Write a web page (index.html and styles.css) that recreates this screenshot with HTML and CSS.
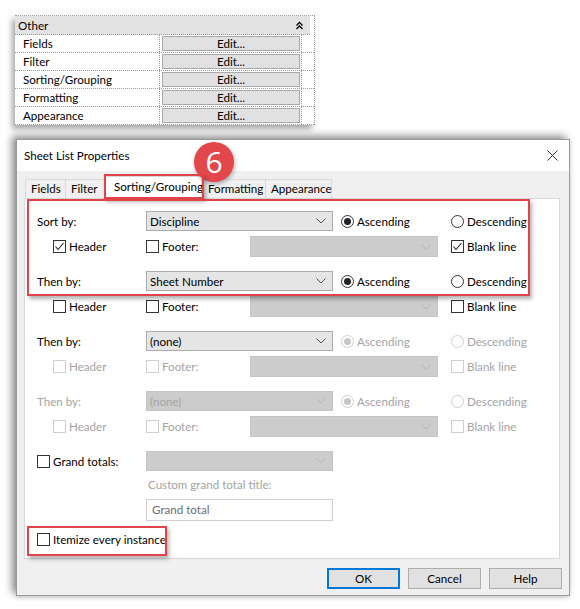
FILE: index.html
```html
<!DOCTYPE html>
<html>
<head>
<meta charset="utf-8">
<link rel="stylesheet" href="styles.css">
</head>
<body>
<div class="props">
  <div class="props-head">
    <span>Other</span>
    <svg class="collapse" width="9" height="9" viewBox="0 0 9 9"><polyline points="1.5,4.5 4.5,1.5 7.5,4.5" fill="none" stroke="#000" stroke-width="1.3"/><polyline points="1.5,8 4.5,5 7.5,8" fill="none" stroke="#000" stroke-width="1.3"/></svg>
  </div>
  <div class="prow"><div class="pname">Fields</div><div class="pval"><div class="editbtn">Edit...</div></div><div class="pend"></div></div>
  <div class="prow"><div class="pname">Filter</div><div class="pval"><div class="editbtn">Edit...</div></div><div class="pend"></div></div>
  <div class="prow"><div class="pname">Sorting/Grouping</div><div class="pval"><div class="editbtn">Edit...</div></div><div class="pend"></div></div>
  <div class="prow"><div class="pname">Formatting</div><div class="pval"><div class="editbtn">Edit...</div></div><div class="pend"></div></div>
  <div class="prow"><div class="pname">Appearance</div><div class="pval"><div class="editbtn">Edit...</div></div><div class="pend"></div></div>
</div>

<div class="dialog">
  <div class="titlebar">
    <span>Sheet List Properties</span>
    <svg class="close" width="11" height="11" viewBox="0 0 11 11"><path d="M0.5 0.5 L10.5 10.5 M10.5 0.5 L0.5 10.5" stroke="#333" stroke-width="1"/></svg>
  </div>
  <div class="dbody">
    <div class="tabs">
      <div class="tab t-fields">Fields</div>
      <div class="tab t-filter">Filter</div>
      <div class="tab active t-sort">Sorting/Grouping</div>
      <div class="tab t-format">Formatting</div>
      <div class="tab t-appear">Appearance</div>
    </div>
    <div class="panel">
      <div class="group">
        <div class="line">
          <div class="lbl">Sort by:</div>
          <div class="combo"><span>Discipline</span><svg class="chev" width="10" height="6" viewBox="0 0 10 6"><polyline points="0.5,0.5 5,5 9.5,0.5" fill="none" stroke="#555" stroke-width="1"/></svg></div>
          <div class="opt asc"><span class="radio on"></span>Ascending</div>
          <div class="opt"><span class="radio"></span>Descending</div>
        </div>
        <div class="line2">
          <div class="opt hdr"><span class="cb"><svg width="11" height="11" viewBox="0 0 11 11"><polyline points="1.5,5.5 4,8.5 9.5,2" fill="none" stroke="#222" stroke-width="1.1"/></svg></span>Header</div>
          <div class="opt ftr"><span class="cb"></span>Footer:</div>
          <div class="combo dis wide"><svg class="chev" width="10" height="6" viewBox="0 0 10 6"><polyline points="0.5,0.5 5,5 9.5,0.5" fill="none" stroke="#b5b5b5" stroke-width="1"/></svg></div>
          <div class="opt blank"><span class="cb"><svg width="11" height="11" viewBox="0 0 11 11"><polyline points="1.5,5.5 4,8.5 9.5,2" fill="none" stroke="#222" stroke-width="1.1"/></svg></span>Blank line</div>
        </div>
      </div>

      <div class="group">
        <div class="line">
          <div class="lbl">Then by:</div>
          <div class="combo"><span>Sheet Number</span><svg class="chev" width="10" height="6" viewBox="0 0 10 6"><polyline points="0.5,0.5 5,5 9.5,0.5" fill="none" stroke="#555" stroke-width="1"/></svg></div>
          <div class="opt asc"><span class="radio on"></span>Ascending</div>
          <div class="opt"><span class="radio"></span>Descending</div>
        </div>
        <div class="line2">
          <div class="opt hdr"><span class="cb"></span>Header</div>
          <div class="opt ftr"><span class="cb"></span>Footer:</div>
          <div class="combo dis wide"><svg class="chev" width="10" height="6" viewBox="0 0 10 6"><polyline points="0.5,0.5 5,5 9.5,0.5" fill="none" stroke="#b5b5b5" stroke-width="1"/></svg></div>
          <div class="opt blank"><span class="cb"></span>Blank line</div>
        </div>
      </div>

      <div class="group">
        <div class="line">
          <div class="lbl">Then by:</div>
          <div class="combo"><span>(none)</span><svg class="chev" width="10" height="6" viewBox="0 0 10 6"><polyline points="0.5,0.5 5,5 9.5,0.5" fill="none" stroke="#555" stroke-width="1"/></svg></div>
          <div class="opt asc off"><span class="radio on"></span>Ascending</div>
          <div class="opt off"><span class="radio"></span>Descending</div>
        </div>
        <div class="line2">
          <div class="opt hdr off"><span class="cb"></span>Header</div>
          <div class="opt ftr off"><span class="cb"></span>Footer:</div>
          <div class="combo dis wide"><svg class="chev" width="10" height="6" viewBox="0 0 10 6"><polyline points="0.5,0.5 5,5 9.5,0.5" fill="none" stroke="#b5b5b5" stroke-width="1"/></svg></div>
          <div class="opt blank off"><span class="cb"></span>Blank line</div>
        </div>
      </div>

      <div class="group">
        <div class="line">
          <div class="lbl off">Then by:</div>
          <div class="combo dis"><span>(none)</span><svg class="chev" width="10" height="6" viewBox="0 0 10 6"><polyline points="0.5,0.5 5,5 9.5,0.5" fill="none" stroke="#b5b5b5" stroke-width="1"/></svg></div>
          <div class="opt asc off"><span class="radio on"></span>Ascending</div>
          <div class="opt off"><span class="radio"></span>Descending</div>
        </div>
        <div class="line2">
          <div class="opt hdr off"><span class="cb"></span>Header</div>
          <div class="opt ftr off"><span class="cb"></span>Footer:</div>
          <div class="combo dis wide"><svg class="chev" width="10" height="6" viewBox="0 0 10 6"><polyline points="0.5,0.5 5,5 9.5,0.5" fill="none" stroke="#b5b5b5" stroke-width="1"/></svg></div>
          <div class="opt blank off"><span class="cb"></span>Blank line</div>
        </div>
      </div>

      <div class="line grand">
        <div class="opt gt"><span class="cb"></span>Grand totals:</div>
        <div class="combo dis"><svg class="chev" width="10" height="6" viewBox="0 0 10 6"><polyline points="0.5,0.5 5,5 9.5,0.5" fill="none" stroke="#b5b5b5" stroke-width="1"/></svg></div>
      </div>
      <div class="custom">Custom grand total title:</div>
      <div class="textbox">Grand total</div>
      <div class="opt itemize"><span class="cb"></span>Itemize every instance</div>
    </div>
    <div class="buttons">
      <div class="btn ok">OK</div>
      <div class="btn">Cancel</div>
      <div class="btn">Help</div>
    </div>
  </div>

  <div class="hl hl-tab"></div>
  <div class="hl hl-sort"></div>
  <div class="hl hl-item"></div>
  <div class="badge">6</div>
</div>
</body>
</html>
```

FILE: styles.css
```css
* { box-sizing: border-box; }
body {
  margin: 0;
  background: #fff;
  font-family: Lato, "Noto Sans", "Liberation Sans", sans-serif;
  font-size: 11.6px;
  color: #000;
  width: 580px;
  height: 609px;
  overflow: hidden;
}

/* property table */
.props {
  margin: 15px 0 0 15px;
  width: 300px;
  border-top: 1px dotted #999;
  border-right: 1px dotted #999;
  background: #fff;
  box-shadow: -3px 4px 6px rgba(0,0,0,0.35);
}
.props-head {
  height: 19px;
  background: #e3e3e3;
  display: flex;
  align-items: center;
  justify-content: space-between;
  padding: 0 6px 0 3px;
  border-bottom: 1px dotted #999;
  margin-right: 4px;
}
.collapse { display: block; }
.prow {
  display: flex;
  height: 18px;
  border-bottom: 1px dotted #999;
}
.pname {
  width: 145px;
  padding-left: 8px;
  line-height: 17px;
  border-right: 1px dotted #999;
}
.pval {
  width: 142px;
  padding: 1px 1px 1px 2px;
  border-right: 1px dotted #999;
}
.pend { flex: 1; }
.editbtn {
  height: 15px;
  background: #e1e1e1;
  border: 1px solid #a9a9a9;
  text-align: center;
  line-height: 13px;
}

/* dialog */
.dialog {
  position: relative;
  margin: 14px 0 0 16px;
  width: 554px;
  height: 457px;
  border: 1px solid #9a9a9a;
  background: #f0f0f0;
  box-shadow: -4px -3px 8px rgba(0,0,0,0.45), 0 2px 4px rgba(0,0,0,0.12);
}
.titlebar {
  height: 31px;
  background: #fff;
  display: flex;
  align-items: center;
  justify-content: space-between;
  padding: 0 11px 0 7px;
}
.close { display: block; }
.dbody {
  padding: 4px 9px 0 7px;
}
.tabs {
  display: flex;
  height: 23px;
  padding-left: 1px;
  align-items: flex-end;
}
.tab {
  height: 19px;
  border: 1px solid #d9d9d9;
  border-bottom: none;
  border-right: none;
  background: #f0f0f0;
  padding-left: 5px;
  line-height: 18px;
  white-space: nowrap;
}
.t-fields { width: 40px; }
.t-filter { width: 40px; }
.t-sort { width: 97px; }
.t-format { width: 63px; }
.t-appear { width: 67px; border-right: 1px solid #d9d9d9; }
.tab.active {
  height: 23px;
  background: #fff;
  padding-left: 8px;
  border-right: 1px solid #d9d9d9;
  line-height: 20px;
  position: relative;
  z-index: 1;
  margin-bottom: -1px;
}
.panel {
  width: 536px;
  height: 361px;
  background: #fff;
  border: 1px solid #d9d9d9;
  padding: 12px 0 0 0;
}
.group { margin-bottom: 14px; }
.line {
  display: flex;
  align-items: center;
  height: 20px;
}
.line2 {
  display: flex;
  align-items: center;
  height: 21px;
  margin-top: 5px;
}
.lbl {
  width: 121px;
  padding-left: 12px;
}
.off, .lbl.off { color: #a3a3a3; }
.combo {
  width: 187px;
  height: 20px;
  background: #e5e5e5;
  border: 1px solid #acacac;
  display: flex;
  align-items: center;
  justify-content: space-between;
  padding: 0 6px 0 3px;
}
.combo.dis {
  background: #cccccc;
  border-color: #c4c4c4;
  color: #a3a3a3;
  justify-content: flex-end;
}
.line .combo.dis { justify-content: space-between; }
.grand .combo.dis { justify-content: flex-end; }
.combo.wide { width: 188px; height: 21px; }
.chev { display: block; }
.opt {
  display: flex;
  align-items: center;
  white-space: nowrap;
}
.asc { width: 110px; margin-left: 8px; }
.hdr { width: 121px; padding-left: 28px; }
.ftr { width: 104px; }
.blank { margin-left: 13px; }
.radio {
  width: 13px;
  height: 13px;
  border: 1px solid #333;
  border-radius: 50%;
  margin-right: 3px;
  display: flex;
  align-items: center;
  justify-content: center;
  background: #fff;
  flex: none;
}
.radio.on::after {
  content: "";
  width: 7px;
  height: 7px;
  border-radius: 50%;
  background: #222;
}
.off .radio { border-color: #cfcfcf; }
.off .radio.on::after { background: #c6c6c6; }
.cb {
  width: 13px;
  height: 13px;
  border: 1px solid #333;
  margin-right: 3px;
  background: #fff;
  display: flex;
  align-items: center;
  justify-content: center;
  flex: none;
}
.cb svg { display: block; }
.off .cb { border-color: #cfcfcf; }
.grand { margin-top: 2px; }
.gt { width: 121px; padding-left: 12px; }
.custom {
  margin: 6px 0 0 123px;
  height: 16px;
  line-height: 16px;
  color: #a3a3a3;
}
.textbox {
  margin: 6px 0 0 121px;
  width: 187px;
  height: 22px;
  border: 1px solid #cfcfcf;
  color: #6d6d6d;
  padding-left: 5px;
  line-height: 20px;
}
.itemize {
  margin: 10px 0 0 12px;
  height: 16px;
}
.buttons {
  display: flex;
  justify-content: flex-end;
  gap: 8px;
  margin-top: 9px;
  margin-right: -2px;
}
.btn {
  width: 73px;
  height: 21px;
  background: #e1e1e1;
  border: 1px solid #adadad;
  text-align: center;
  line-height: 19px;
}
.btn.ok { border: 2px solid #0078d7; line-height: 17px; }

/* annotation overlays */
.hl {
  position: absolute;
  border: 2px solid #e0444a;
  box-shadow: 2px 3px 4px rgba(0,0,0,0.3);
  z-index: 3;
}
.hl-tab { left: 87px; top: 34px; width: 100px; height: 25px; }
.hl-sort { left: 10px; top: 59px; width: 503px; height: 97px; }
.hl-item { left: 10px; top: 386px; width: 140px; height: 30px; }
.badge {
  position: absolute;
  left: 177px;
  top: 2px;
  width: 40px;
  height: 40px;
  border-radius: 50%;
  background: #e2474b;
  color: #fff;
  font-family: "Open Sans", "Noto Sans", sans-serif;
  font-size: 30px;
  line-height: 40px;
  text-align: center;
  z-index: 2;
  box-shadow: 1px 2px 4px rgba(0,0,0,0.3);
}
```
